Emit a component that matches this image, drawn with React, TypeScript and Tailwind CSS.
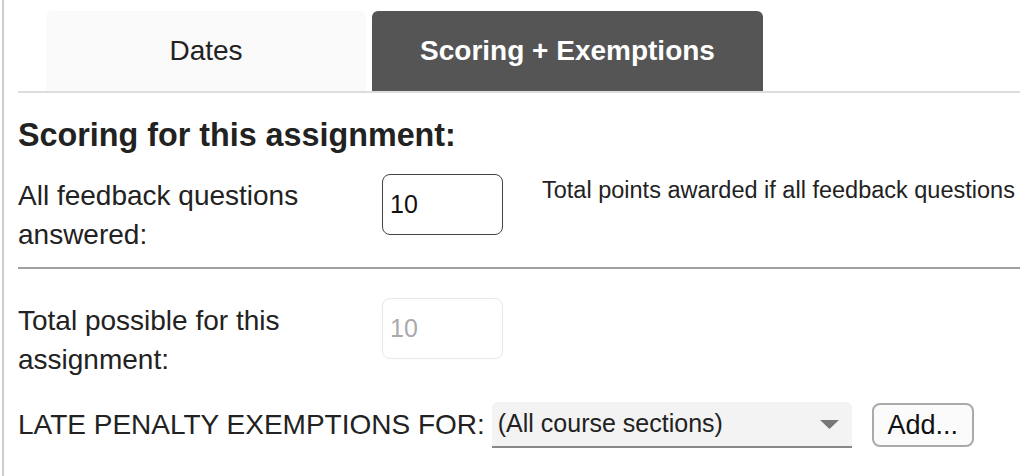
export default function App() {
  return (
    <div
      className="w-[1020px] h-[476px] overflow-hidden bg-white text-[#222]"
      style={{ fontFamily: '"Liberation Sans", Arial, sans-serif' }}
    >
      <div className="ml-[2px] h-full border-l-2 border-[#cccccc] pl-[14px]">
        {/* tabs */}
        <div className="pt-[11px] border-b-2 border-[#dddddd] flex pl-[28px] gap-[6px]">
          <div className="w-[320px] h-[80px] bg-[#fafafa] rounded-t-[6px] flex items-center justify-center text-[28px] text-[#222]">
            Dates
          </div>
          <div className="w-[391px] h-[80px] bg-[#555555] rounded-t-[6px] flex items-center justify-center text-[28px] font-bold text-white">
            Scoring + Exemptions
          </div>
        </div>

        <h2 className="mt-[23px] text-[32.3px] leading-[38px] font-bold text-[#222]">
          Scoring for this assignment:
        </h2>

        <div className="flex items-start mt-[20px] pb-[13px] border-b-2 border-[#a0a0a0]">
          <div className="w-[364px] mt-[2px] text-[28px] leading-[39px] text-[#222]">
            All feedback questions
            <br />
            answered:
          </div>
          <input
            readOnly
            value="10"
            className="w-[121px] h-[61px] border border-[#444] rounded-[8px] px-[7px] text-[25px] text-[#111] outline-none"
          />
          <div className="ml-[39px] mt-[3px] text-[23.5px] leading-[26px] whitespace-nowrap text-[#222]">
            Total points awarded if all feedback questions
          </div>
        </div>

        <div className="flex items-start mt-[29px]">
          <div className="w-[364px] mt-[3px] text-[28px] leading-[39px] text-[#222]">
            Total possible for this
            <br />
            assignment:
          </div>
          <input
            readOnly
            disabled
            value="10"
            className="w-[121px] h-[61px] border border-[#e8e8e8] rounded-[8px] px-[7px] text-[25px] text-[#aaaaaa] bg-white outline-none"
          />
        </div>

        <div className="flex items-center mt-[23px]">
          <span className="text-[28px] text-[#222] whitespace-nowrap">LATE PENALTY EXEMPTIONS FOR:</span>
          <div className="ml-[7px] w-[360px] h-[46px] bg-[#f3f3f3] border-b-2 border-[#888] rounded-t-[6px] flex items-center justify-between pl-[6px] pr-[13px] text-[25px] text-[#222]">
            <span>(All course sections)</span>
            <svg width="19" height="9" viewBox="0 0 19 9">
              <path d="M0 0 L19 0 L9.5 9 Z" fill="#777" />
            </svg>
          </div>
          <button className="ml-[20px] w-[102px] h-[44px] border-2 border-[#aaaaaa] rounded-[8px] bg-[#fbfbfb] text-[27px] text-[#111]">
            Add...
          </button>
        </div>
      </div>
    </div>
  );
}
